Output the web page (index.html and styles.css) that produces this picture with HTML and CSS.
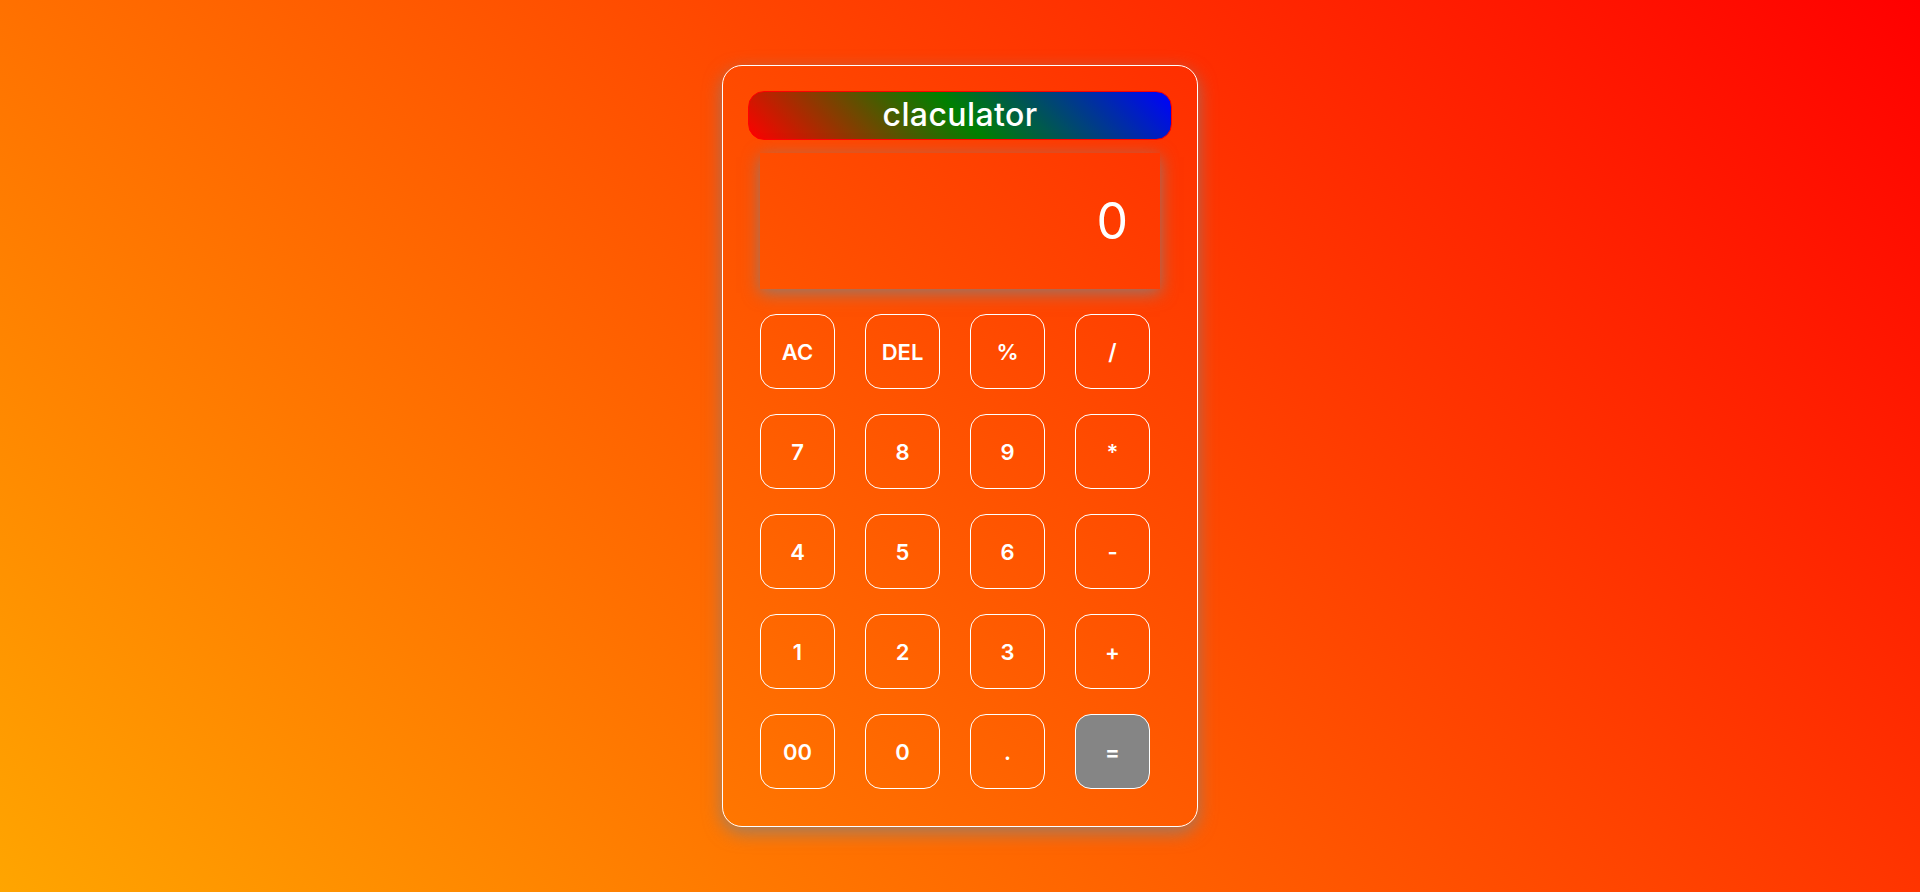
FILE: index.html
```html
<!DOCTYPE html>
<html lang="en">
<head>
<meta charset="UTF-8">
<title>Calculator</title>
<link rel="stylesheet" href="styles.css">
</head>
<body>
<div class="calculator">
  <div class="title">claculator</div>
  <div class="body">
    <div class="display">0</div>
    <div class="keys">
      <button class="key">AC</button>
      <button class="key">DEL</button>
      <button class="key">%</button>
      <button class="key">/</button>
      <button class="key">7</button>
      <button class="key">8</button>
      <button class="key">9</button>
      <button class="key">*</button>
      <button class="key">4</button>
      <button class="key">5</button>
      <button class="key">6</button>
      <button class="key">-</button>
      <button class="key">1</button>
      <button class="key">2</button>
      <button class="key">3</button>
      <button class="key">+</button>
      <button class="key">00</button>
      <button class="key">0</button>
      <button class="key">.</button>
      <button class="key equal">=</button>
    </div>
  </div>
</div>
</body>
</html>
```
FILE: styles.css
```css
* { box-sizing: border-box; }
html, body { margin: 0; padding: 0; }
body {
  min-height: 100vh;
  display: flex;
  align-items: center;
  justify-content: center;
  background: linear-gradient(45deg, #ffa500, #ff0000);
  font-family: Inter, "Liberation Sans", sans-serif;
  color: #fff;
}
.calculator {
  width: 476px;
  height: 762px;
  border: 1px solid #fff;
  border-radius: 20px;
  padding: 25px;
  box-shadow: 0 6px 18px rgba(128, 128, 128, 0.75);
  display: flex;
  flex-direction: column;
}
.title {
  height: 49px;
  border: 1px solid red;
  border-radius: 16px;
  background: linear-gradient(45deg, red, green, blue);
  display: flex;
  align-items: center;
  justify-content: center;
  font-size: 32px;
  font-weight: 500;
  letter-spacing: 0.4px;
  padding-bottom: 2px;
}
.body {
  margin: 13px 12px 0;
  display: flex;
  flex-direction: column;
  gap: 25px;
}
.display {
  height: 136px;
  box-shadow: 0 4px 16px rgba(128, 128, 128, 0.85);
  display: flex;
  align-items: center;
  justify-content: flex-end;
  padding-right: 32px;
  font-size: 50px;
  font-weight: 400;
}
.keys {
  display: grid;
  grid-template-columns: repeat(4, 75px);
  grid-auto-rows: 75px;
  column-gap: 30px;
  row-gap: 25px;
}
.key {
  background: transparent;
  border: 1px solid #fff;
  border-radius: 16px;
  color: #fff;
  font-family: Inter, "Liberation Sans", sans-serif;
  font-size: 22px;
  font-weight: 600;
  padding: 0;
}
.key.equal {
  background: #858585;
}
```
